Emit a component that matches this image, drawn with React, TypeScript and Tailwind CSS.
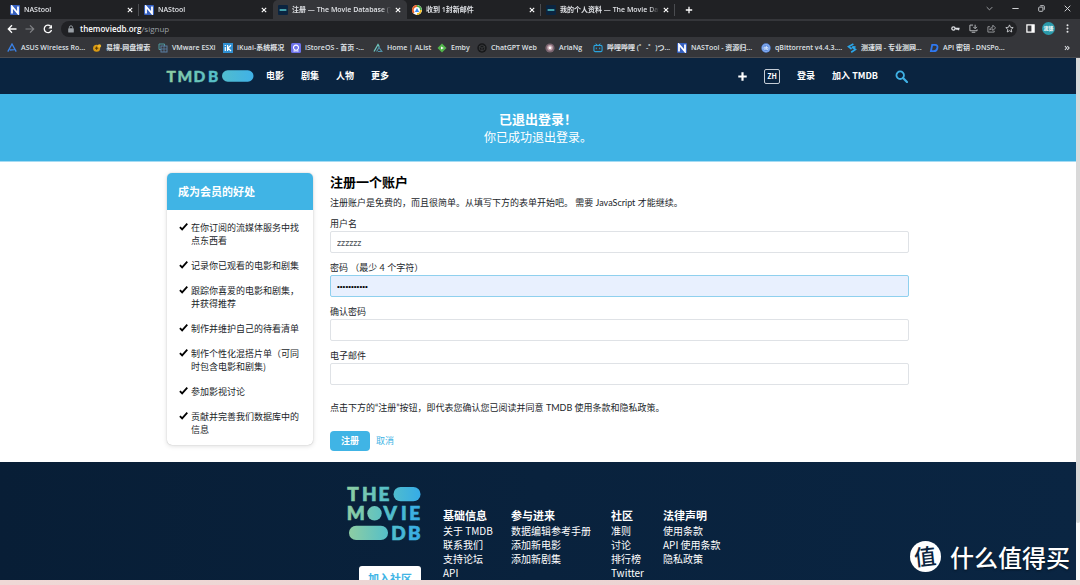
import { useState } from "react";
import type { ReactNode } from "react";

const cjk = "font-['Noto_Sans_CJK_SC','Liberation_Sans',sans-serif]";
const body = "font-['Lato','Noto_Sans_CJK_SC',sans-serif]";
const ui = "font-['Open_Sans','Noto_Sans_CJK_SC',sans-serif]";

function NIcon() {
  return (
    <svg viewBox="0 0 10 10" className="size-[10px] shrink-0" aria-hidden="true">
      <rect width="10" height="10" rx="1" fill="#3560c0" />
      <path d="M2 8.5v-7L8 8.5v-7" fill="none" stroke="#fff" strokeWidth="1.8" />
    </svg>
  );
}

function TmdbIcon() {
  return (
    <svg viewBox="0 0 10 10" className="size-[10px] shrink-0" aria-hidden="true">
      <rect width="10" height="10" rx="1" fill="#0a2440" />
      <path d="M2.2 5h5.6" stroke="#54c8cc" strokeWidth="1.6" strokeLinecap="round" />
    </svg>
  );
}

function MailIcon() {
  return (
    <svg viewBox="0 0 10 10" className="size-[10px] shrink-0" aria-hidden="true">
      <circle cx="5" cy="5" r="5" fill="#fff" />
      <path d="M5 1a4 4 0 0 1 3.9 4" fill="none" stroke="#4fae4b" strokeWidth="1.8" />
      <path d="M8.9 5A4 4 0 0 1 5 9" fill="none" stroke="#f5c021" strokeWidth="1.8" />
      <path d="M5 1a4 4 0 0 0-3 6.8" fill="none" stroke="#e8632c" strokeWidth="1.8" />
      <path d="M5 3l2.2 4H2.8z" fill="#3a8df0" />
    </svg>
  );
}

function Svg({ children, className = "size-[10px]" }: { children: ReactNode; className?: string }) {
  return (
    <svg viewBox="0 0 10 10" className={`shrink-0 ${className}`} fill="none" aria-hidden="true">
      {children}
    </svg>
  );
}

function CloseGlyph() {
  return (
    <svg viewBox="0 0 6 6" className="size-[6px]" stroke="currentColor" strokeWidth="1.1" aria-hidden="true">
      <path d="M.8.8l4.4 4.4M5.2.8L.8 5.2" />
    </svg>
  );
}

const tabs = [
  { title: "NAStool", icon: <NIcon />, active: false, line: true },
  { title: "NAStool", icon: <NIcon />, active: false, line: false },
  { title: "注册 — The Movie Database (T", icon: <TmdbIcon />, active: true, line: false },
  { title: "收到 1封新邮件", icon: <MailIcon />, active: false, line: true },
  { title: "我的个人资料 — The Movie Dat", icon: <TmdbIcon />, active: false, line: true },
];

const bookmarks = [
  {
    title: "ASUS Wireless Ro...",
    width: "w-[85px]",
    icon: <Svg><path d="M.8 8.6L5 1l4.2 7.6M2.8 7l4.6-.4" stroke="#3b82e6" strokeWidth="1.3" /></Svg>,
  },
  {
    title: "易搜-网盘搜索",
    width: "w-[66px]",
    icon: <Svg><circle cx="4.6" cy="5.2" r="3.5" fill="#d99a14" /><circle cx="7.4" cy="3" r="1.8" fill="#f0b62a" /><path d="M3 5.2h3.2M4.6 3.6v3.2" stroke="#5a3c00" /></Svg>,
  },
  {
    title: "VMware ESXi",
    width: "w-[65px]",
    icon: <Svg><path d="M1 1h5.5v2M1 1v5.500h2" stroke="#4f9aa0" /><rect x="3" y="3" width="6" height="6" stroke="#5b7fa5" /><path d="M3 6h6M6 3v6" stroke="#5b7fa5" strokeWidth=".8" /></Svg>,
  },
  {
    title: "iKuai-系统概况",
    width: "w-[68px]",
    icon: <Svg><rect width="10" height="10" fill="#2f8fd2" /><path d="M2.300 4v4M2.300 2v1M4.600 2v6M8 2.300L5 5l3 3" stroke="#fff" strokeWidth="1.200" /></Svg>,
  },
  {
    title: "iStoreOS - 首页 -...",
    width: "w-[82px]",
    icon: <Svg><rect width="10" height="10" rx="1.500" fill="#6d72ea" /><path d="M2.400 8h1.800V7a2.500 2.500 0 1 1 1.600 0v1h1.800" stroke="#fff" strokeWidth="1.100" /></Svg>,
  },
  {
    title: "Home | AList",
    width: "w-[64px]",
    icon: <Svg><path d="M1 8.500L5 1.500l1.300 2.300" stroke="#70c6be" strokeWidth="1.300" /><path d="M3.600 8.500L6 4.300l2.800 4.200H5" stroke="#4f90a8" strokeWidth="1.200" /></Svg>,
  },
  {
    title: "Emby",
    width: "w-[40px]",
    icon: <Svg><path d="M5 .5L9.500 5 5 9.500.5 5z" fill="#52b54b" /><path d="M4 3.400L6.800 5 4 6.600z" fill="#fff" /></Svg>,
  },
  {
    title: "ChatGPT Web",
    width: "w-[68px]",
    icon: <Svg><circle cx="5" cy="5" r="4.700" fill="#17181a" /><path d="M5 2l2.600 1.500v3L5 8 2.400 6.500v-3zM2.400 3.500L5 5l2.600-1.500M5 5v3" stroke="#4a4b4e" strokeWidth=".6" /></Svg>,
  },
  {
    title: "AriaNg",
    width: "w-[48px]",
    icon: <Svg><circle cx="5" cy="5" r="4.600" fill="#7a6570" /><circle cx="5" cy="4.800" r="2.800" fill="#c3a3ac" /><circle cx="5" cy="4.800" r="1.400" fill="#fff" /></Svg>,
  },
  {
    title: "哔哩哔哩 (゜-゜)つ...",
    width: "w-[84px]",
    icon: <Svg><rect x=".9" y="2.400" width="8.200" height="6.200" rx="1.300" stroke="#2ba3dc" strokeWidth="1.100" /><path d="M2.800.6l1.200 1.600M7.200.6L6 2.200M3.300 4.600v1.600M6.700 4.600v1.600" stroke="#2ba3dc" /></Svg>,
  },
  { title: "NASTool - 资源归...", width: "w-[84px]", icon: <NIcon /> },
  {
    title: "qBittorrent v4.4.3....",
    width: "w-[86px]",
    icon: <Svg><circle cx="5" cy="5" r="4.700" fill="#5a8be0" /><circle cx="5" cy="5" r="3.600" stroke="#a9c6f6" strokeWidth=".6" /><path d="M3 4.200h1.800v2H3zM5.400 2.800v3.600h1.600V4.400H5.400" stroke="#e3edfd" strokeWidth=".8" /></Svg>,
  },
  {
    title: "测速网 - 专业测网...",
    width: "w-[82px]",
    icon: <Svg><path d="M6.400 1L1.600 3.600 4.600 6M8.600 4L5.400 3.800M5 4l3.400 2.400L4.200 9.200" stroke="#2aa6ea" strokeWidth="1.700" /></Svg>,
  },
  {
    title: "API 密钥 - DNSPo...",
    width: "w-[84px]",
    icon: <Svg><path d="M3.200 1.800h2.900c2 0 2.700 1.300 2.300 3.200S6.700 8.200 4.900 8.200H1.900z" stroke="#2f78f0" strokeWidth="1.800" /></Svg>,
  },
];

function BrowserChrome() {
  return (
    <header className={`${ui} shrink-0 bg-[#35363a] text-[7px] font-semibold text-[#dfe1e5]`}>
      <div className="flex h-[19px] items-stretch bg-[#202124] pl-[5px]">
        {tabs.map((tab, i) => (
          <div
            key={i}
            className={`flex w-[134px] items-center gap-[4px] pt-px pl-[5px] ${
              tab.active ? "rounded-t-[5px] bg-[#35363a]" : ""
            }`}
          >
            {tab.icon}
            <span className="min-w-0 flex-1 overflow-hidden leading-[12px] whitespace-nowrap [mask-image:linear-gradient(to_right,black_90%,transparent)]">
              {tab.title}
            </span>
            <button type="button" aria-label="关闭标签页" className="flex text-white">
              <CloseGlyph />
            </button>
            <span className={`ml-px h-[12px] w-px ${tab.line ? "bg-[#4a4c50]" : "bg-transparent"}`} />
          </div>
        ))}
        <button type="button" aria-label="新标签页" className="ml-[10px] flex items-center">
          <Svg className="size-[8px]"><path d="M5 1v8M1 5h8" stroke="#fff" strokeWidth="1.600" /></Svg>
        </button>
        <div className="ml-auto flex items-center gap-[19px] pr-[9px] pb-[2px]">
          <button type="button" aria-label="搜索标签页"><Svg className="size-[7px]"><path d="M1 3l4 4 4-4" stroke="#a9abae" strokeWidth="1.300" /></Svg></button>
          <button type="button" aria-label="最小化"><Svg className="size-[7px]"><path d="M.5 5h9" stroke="#dfe1e5" strokeWidth="1.300" /></Svg></button>
          <button type="button" aria-label="还原"><Svg className="size-[7px]"><rect x="1" y="3" width="6" height="6" rx="1" stroke="#dfe1e5" strokeWidth="1.200" /><path d="M3.200 1H8a1 1 0 0 1 1 1v4.800" stroke="#dfe1e5" strokeWidth="1.200" /></Svg></button>
          <button type="button" aria-label="关闭"><Svg className="size-[7px]"><path d="M1 1l8 8M9 1L1 9" stroke="#dfe1e5" strokeWidth="1.300" /></Svg></button>
        </div>
      </div>

      <div className="flex h-[19px] items-center pr-[8px] pl-[7px]">
        <button type="button" aria-label="后退"><Svg><path d="M9.500 5h-8M5 1.300L1.300 5 5 8.700" stroke="#fff" strokeWidth="1.300" /></Svg></button>
        <button type="button" aria-label="前进" className="ml-[8px]"><Svg><path d="M.5 5h8M5 1.300L8.700 5 5 8.700" stroke="#808286" strokeWidth="1.200" /></Svg></button>
        <button type="button" aria-label="重新加载" className="ml-[8px]"><Svg><path d="M8.500 6A3.700 3.700 0 1 1 7.600 2.300" stroke="#fff" strokeWidth="1.300" /><path d="M9 .8v3.600H5.400z" fill="#fff" /></Svg></button>
        <div className="ml-[8px] flex h-[16px] flex-1 items-center rounded-full bg-[#202124] pr-[3px] pl-[6px]">
          <Svg className="size-[8px]"><rect x="1.500" y="4" width="7" height="5.500" rx=".8" fill="#9aa0a6" /><path d="M3 4.200V3a2 2 0 0 1 4 0v1.200" stroke="#9aa0a6" strokeWidth="1.200" /></Svg>
          <p className="ml-[5px] flex-1 text-[8px] leading-[14px] text-white">
            themoviedb.org<span className="font-normal text-[#9aa0a6]">/signup</span>
          </p>
          <div className="flex items-center gap-[9px]">
            <button type="button" aria-label="密码"><Svg className="size-[9px]"><circle cx="2.700" cy="5" r="1.800" stroke="#dfe1e5" strokeWidth="1.400" /><path d="M4.500 5h5M8.400 5v2M6.700 5v1.600" stroke="#dfe1e5" strokeWidth="1.400" /></Svg></button>
            <button type="button" aria-label="安装"><Svg className="size-[9px]"><path d="M4.500 1.200H1v6.300h8V6M3 9.200h4M6.800.8v4M4.800 3.200l2 2 2-2" stroke="#c4c6ca" /></Svg></button>
            <button type="button" aria-label="分享"><Svg className="size-[9px]"><path d="M3.200 3H1v6h7V7.500M3 6.500c.3-2 1.600-3 3.500-3V1.300l3 3-3 3V5.400C5 5.400 4 5.700 3 6.500z" stroke="#a9abaf" strokeWidth=".9" /></Svg></button>
            <button type="button" aria-label="收藏"><Svg className="size-[9px]"><path d="M5 1l1.200 2.700 2.900.3-2.200 2 .6 2.900L5 7.400 2.500 8.900 3.100 6 .9 4l2.900-.3z" stroke="#dfe1e5" strokeWidth=".9" /></Svg></button>
          </div>
        </div>
        <button type="button" aria-label="侧边栏" className="ml-[9px]"><Svg className="size-[9px]"><rect x="1" y="1" width="8" height="8" stroke="#fff" strokeWidth="1.400" /><path d="M6 1h3v8H6z" fill="#fff" /></Svg></button>
        <button type="button" aria-label="用户" className="ml-[7px] flex size-[13px] items-center justify-center rounded-full bg-[#2b9aab] text-[5px] leading-none text-white">流锋</button>
        <button type="button" aria-label="菜单" className="ml-[8px]"><Svg className="size-[9px]"><g fill="#e6e7e9"><circle cx="5" cy="1.500" r="1.100" /><circle cx="5" cy="5" r="1.100" /><circle cx="5" cy="8.500" r="1.100" /></g></Svg></button>
      </div>

      <nav aria-label="书签" className="flex h-[20px] items-center border-b border-[#4b4c50] pr-[10px] pl-[7px]">
        {bookmarks.map((b) => (
          <a key={b.title} href="#" className={`flex shrink-0 items-center gap-[4px] leading-[12px] whitespace-nowrap ${b.width}`}>
            {b.icon}
            {b.title}
          </a>
        ))}
        <button type="button" className="ml-auto" aria-label="更多书签">
          <Svg className="size-[6px]"><path d="M1.500 2l3 3-3 3M5.500 2l3 3-3 3" stroke="#dfe1e5" strokeWidth="1.700" /></Svg>
        </button>
      </nav>
    </header>
  );
}

function SiteHeader() {
  return (
    <header className="flex h-[36px] shrink-0 items-center bg-[#0a2440] text-[9px] font-bold text-white">
      <div className="mx-auto flex w-full max-w-[742px] items-center">
        <a href="#" aria-label="TMDB">
          <svg viewBox="0 0 87 12" className="h-[12px] w-[87px] overflow-visible">
            <defs>
              <linearGradient id="brand" gradientUnits="userSpaceOnUse" x1="0" x2="87">
                <stop offset="0" stopColor="#90cea1" />
                <stop offset=".56" stopColor="#54bfc9" />
                <stop offset="1" stopColor="#3fb1e8" />
              </linearGradient>
            </defs>
            <g fill="url(#brand)">
              <text y="11.500" x="-.5 10.500 26.500 41" fontFamily="Lato, sans-serif" fontWeight="900" fontSize="15.500" stroke="url(#brand)" strokeWidth=".4">TMDB</text>
              <rect x="55" y=".3" width="31.500" height="11.400" rx="5.700" />
            </g>
          </svg>
        </a>
        <nav className="ml-[12px] flex gap-[17px]">
          <a href="#">电影</a>
          <a href="#">剧集</a>
          <a href="#">人物</a>
          <a href="#">更多</a>
        </nav>
        <div className="ml-auto flex items-center gap-[17px] pr-px">
          <button type="button" aria-label="添加"><Svg className="size-[9px]"><path d="M5 .3v9.400M.3 5h9.400" stroke="#fff" strokeWidth="2.400" /></Svg></button>
          <button type="button" className="flex h-[15px] w-[16px] items-center justify-center rounded-[2px] border border-[#c5cdd6] text-[7px] leading-none">ZH</button>
          <a href="#">登录</a>
          <a href="#">加入 TMDB</a>
          <button type="button" aria-label="搜索"><Svg className="size-[13px]"><circle cx="4" cy="4" r="2.900" stroke="#3fb1e5" strokeWidth="1.400" /><path d="M6.200 6.200l3 3" stroke="#3fb1e5" strokeWidth="1.700" strokeLinecap="round" /></Svg></button>
        </div>
      </div>
    </header>
  );
}

const benefits = [
  "在你订阅的流媒体服务中找点东西看",
  "记录你已观看的电影和剧集",
  "跟踪你喜爱的电影和剧集，并获得推荐",
  "制作并维护自己的待看清单",
  "制作个性化混搭片单（可同时包含电影和剧集)",
  "参加影视讨论",
  "贡献并完善我们数据库中的信息",
];

function Benefits() {
  return (
    <aside className="w-[146px] shrink-0 self-start overflow-hidden rounded-[5px] bg-white shadow-[0_0_1px_rgba(0,0,0,0.3),0_1px_5px_rgba(0,0,0,0.14)]">
      <h2 className="bg-[#40b4e5] px-[11px] text-[11px] leading-[37px] font-bold text-white">成为会员的好处</h2>
      <ul className="flex flex-col gap-[12px] pt-[11px] pb-[9px] pr-[10px] pl-[12px] text-[9px] leading-[13px] text-[#212529]">
        {benefits.map((b) => (
          <li key={b} className="flex gap-[3px]">
            <Svg className="mt-px size-[9px]"><path d="M1 5.600l2.500 2.600L9.200 1.800" stroke="#000" strokeWidth="2" /></Svg>
            <span>{b}</span>
          </li>
        ))}
      </ul>
    </aside>
  );
}

const fields = [
  { id: "username", label: "用户名", type: "text", value: "zzzzzz" },
  { id: "password", label: "密码 （最少 4 个字符）", type: "password", value: "abcdefghijk" },
  { id: "confirm", label: "确认密码", type: "password", value: "" },
  { id: "email", label: "电子邮件", type: "email", value: "" },
];

function Field({ id, label, type, initial }: { id: string; label: string; type: string; initial: string }) {
  const [value, setValue] = useState(initial);
  const look =
    id === "password"
      ? "border-[#8fd0ee] bg-[#e8f0fe] text-[8px] font-['Liberation_Sans',sans-serif] text-black"
      : "border-[#dfe2e6] bg-white text-[9px] text-[#495057]";
  return (
    <div className="flex flex-col">
      <label htmlFor={id} className="leading-[14px]">{label}</label>
      <input
        id={id}
        type={type}
        value={value}
        onChange={(e) => setValue(e.target.value)}
        className={`h-[22px] w-full rounded-[2px] border px-[6px] outline-none ${look}`}
      />
    </div>
  );
}

function SignupForm() {
  return (
    <form className={`${body} min-w-0 flex-1 text-[9px] leading-[14px] text-[#212529]`} onSubmit={(e) => e.preventDefault()}>
      <h1 className="text-[13px] leading-[18px] font-bold text-black">注册一个账户</h1>
      <p className="mt-[5px]">注册账户是免费的，而且很简单。从填写下方的表单开始吧。 需要 JavaScript 才能继续。</p>
      <div className="mt-[7px] flex flex-col gap-[8px]">
        {fields.map((f) => (
          <Field key={f.id} id={f.id} label={f.label} type={f.type} initial={f.value} />
        ))}
      </div>
      <p className="mt-[16px]">点击下方的“注册”按钮，即代表您确认您已阅读并同意 TMDB 使用条款和隐私政策。</p>
      <div className="mt-[16px] flex items-center gap-[6px]">
        <button type="submit" className="h-[20px] rounded-[4px] bg-[#40b4e5] px-[11px] font-bold text-white">注册</button>
        <a href="#" className="text-[#40b4e5]">取消</a>
      </div>
    </form>
  );
}

const footerColumns = [
  { title: "基础信息", width: "w-[68px]", links: ["关于 TMDB", "联系我们", "支持论坛", "API"] },
  { title: "参与进来", width: "w-[100px]", links: ["数据编辑参考手册", "添加新电影", "添加新剧集"] },
  { title: "社区", width: "w-[52px]", links: ["准则", "讨论", "排行榜", "Twitter"] },
  { title: "法律声明", width: "w-[66px]", links: ["使用条款", "API 使用条款", "隐私政策"] },
];

function SiteFooter() {
  return (
    <footer className="flex flex-1 justify-center bg-linear-to-r from-[#081e36] via-[#09223d] to-[#0a2542] pt-[24px] text-white">
      <div className="flex flex-col items-end">
        <svg viewBox="0 0 74 55" className="h-[55px] w-[74px] overflow-visible" role="img" aria-label="The Movie DB">
          <defs>
            <linearGradient id="stack" gradientUnits="userSpaceOnUse" x1="0" x2="74">
              <stop offset="0" stopColor="#90cea1" />
              <stop offset=".56" stopColor="#54bfc9" />
              <stop offset="1" stopColor="#35abe8" />
            </linearGradient>
          </defs>
          <g fill="url(#stack)" fontFamily="Lato, sans-serif" fontWeight="900" fontSize="19">
            <g stroke="url(#stack)" strokeWidth=".7">
              <text y="14.800" x=".3 15 31.500">THE</text>
              <text y="34" x="-.3">M</text>
              <text y="34" x="36.500 54 62.300">VIE</text>
              <text y="53.500" x="44.300 61">DB</text>
            </g>
            <rect x="46.500" y="1" width="27" height="14.300" rx="7.100" />
            <circle cx="27.500" cy="27.300" r="7.200" />
            <rect x="2" y="39.700" width="39" height="14.300" rx="7.100" />
          </g>
        </svg>
        <a href="#" className="mt-[25px] rounded-[3px] bg-white px-[9px] text-[11px] leading-[25px] font-bold text-[#40b4e5]">加入社区</a>
      </div>
      <div className="ml-[22px] flex pt-[21px]">
        {footerColumns.map((c) => (
          <div key={c.title} className={`${c.width} whitespace-nowrap`}>
            <h3 className="text-[11px] leading-[16px] font-bold">{c.title}</h3>
            <ul className="mt-px text-[10px] leading-[14px]">
              {c.links.map((l) => (
                <li key={l}><a href="#">{l}</a></li>
              ))}
            </ul>
          </div>
        ))}
      </div>
    </footer>
  );
}

export default function App() {
  return (
    <div className="relative flex h-screen flex-col overflow-hidden bg-white">
      <BrowserChrome />
      <div className="flex min-h-0 flex-1">
        <div className={`${cjk} flex min-w-0 flex-1 flex-col overflow-hidden`}>
          <SiteHeader />
          <section className="shrink-0 border-b border-[#a5dbf3] bg-[#40b4e5] pt-[16px] pb-[16px] text-center text-white">
            <h2 className="text-[13px] leading-[18px] font-bold">已退出登录！</h2>
            <p className="text-[12px] leading-[17px]">你已成功退出登录。</p>
          </section>
          <main className="mx-auto flex w-full max-w-[742px] shrink-0 gap-[17px] pt-[11px] pb-[11px]">
            <Benefits />
            <SignupForm />
          </main>
          <SiteFooter />
        </div>
        <div className="w-[4px] shrink-0 bg-[#f8f8f8]">
          <div className="h-[89%] rounded-b-[2px] bg-[#d9d9d9]" />
        </div>
      </div>
      <div className="h-[5px] shrink-0 bg-linear-to-r from-[#efd8d6] via-[#ecd4d3] to-[#eed6d5]" />
      <div className={`${cjk} absolute right-[10px] bottom-[13px] flex items-center gap-[9px] text-white [text-shadow:0_1px_2px_rgba(0,0,0,0.5)]`}>
        <span className="flex size-[31px] items-center justify-center rounded-full bg-white text-[22px] leading-[28px] font-medium text-[#0a2440] [text-shadow:none]">
          <span className="-mt-[3px] -rotate-6">值</span>
        </span>
        <span className="text-[24px] leading-[28px] font-medium">什么值得买</span>
      </div>
    </div>
  );
}
